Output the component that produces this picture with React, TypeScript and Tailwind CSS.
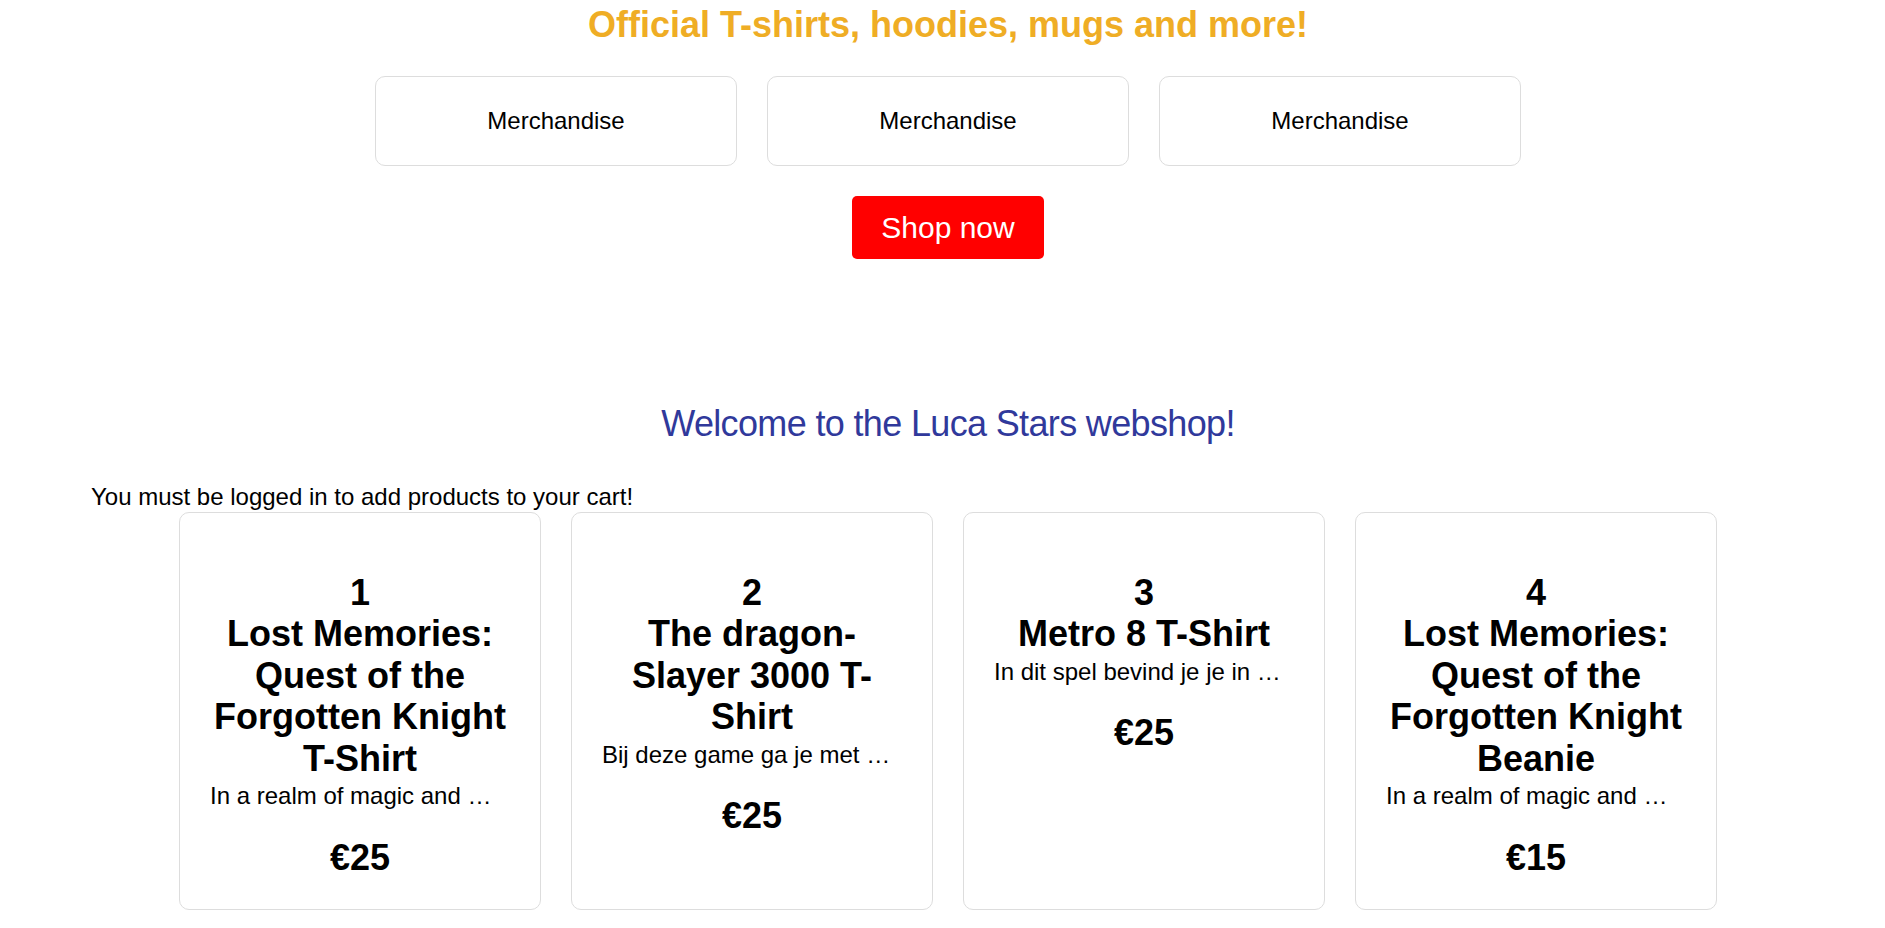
import React from 'react';

const products = [
  {
    id: 1,
    name: 'Lost Memories: Quest of the Forgotten Knight T-Shirt',
    description: 'In a realm of magic and mystery, a forgotten knight awakens without his memories.',
    price: 25,
  },
  {
    id: 2,
    name: 'The dragon-Slayer 3000 T-Shirt',
    description: 'Bij deze game ga je met een zwaard op pad om draken te verslaan.',
    price: 25,
  },
  {
    id: 3,
    name: 'Metro 8 T-Shirt',
    description: 'In dit spel bevind je je in een verlaten metrostation onder de stad.',
    price: 25,
  },
  {
    id: 4,
    name: 'Lost Memories: Quest of the Forgotten Knight Beanie',
    description: 'In a realm of magic and mystery, a forgotten knight awakens without his memories.',
    price: 15,
  },
];

const MerchBox = () => (
  <div className="w-[362px] rounded-[10px] border border-[#dddddd] py-[30px] text-center text-[24px] leading-[28px] text-black">
    Merchandise
  </div>
);

const ProductCard = ({ product }: { product: (typeof products)[number] }) => (
  <div className="w-[362px] rounded-[10px] border border-[#dddddd] px-[30px] pt-[59px] pb-[31px] text-center text-black">
    <h2 className="text-[36px] font-bold leading-[41.4px]">
      {product.id}
      <br />
      {product.name}
    </h2>
    <p className="mt-[3px] w-[290px] overflow-hidden text-ellipsis whitespace-nowrap text-[24px] leading-[27.6px]">
      {product.description}
    </p>
    <p className="mt-[27px] text-[36px] font-bold leading-[41.4px]">€{product.price}</p>
  </div>
);

const App = () => {
  return (
    <div className="min-h-screen bg-white pl-[90px] pr-[79px] pt-[4px] font-['Liberation_Sans',Arial,sans-serif]">
      <h1 className="text-center text-[36px] font-bold leading-[41px] text-[#efad25]">
        Official T-shirts, hoodies, mugs and more!
      </h1>

      <div className="mt-[31px] flex justify-center gap-[30px]">
        <MerchBox />
        <MerchBox />
        <MerchBox />
      </div>

      <div className="mt-[30px] flex justify-center">
        <button className="flex h-[63px] w-[192px] items-center justify-center rounded-[5px] bg-[#ff0000] text-[30px] leading-[34px] text-white">
          Shop now
        </button>
      </div>

      <h2 className="mt-[144px] text-center text-[36px] leading-[41px] tracking-[-0.65px] text-[#30399b]">
        Welcome to the Luca Stars webshop!
      </h2>

      <p className="mt-[39px] pl-[1px] text-[24px] leading-[28px] text-black">
        You must be logged in to add products to your cart!
      </p>

      <div className="mt-[1px] flex justify-center gap-[30px]">
        {products.map((p) => (
          <ProductCard key={p.id} product={p} />
        ))}
      </div>
    </div>
  );
};

export default App;
